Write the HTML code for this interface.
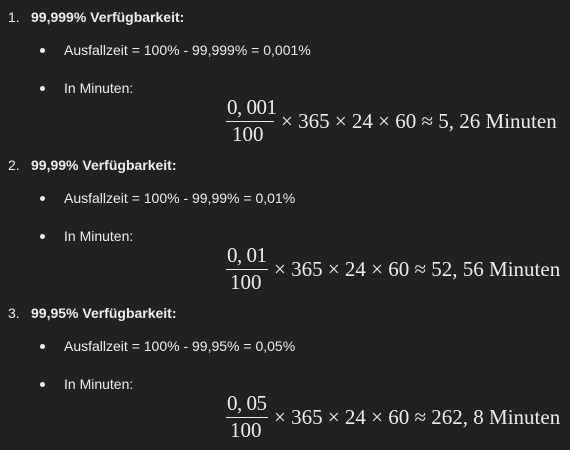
<!DOCTYPE html>
<html><head><style>
body{margin:0;width:570px;height:450px;background:#212121;color:#ececec;font-family:"Liberation Sans",sans-serif;font-size:14px;position:relative;overflow:hidden}
.a{position:absolute;white-space:nowrap;line-height:18px}
.m{position:absolute;white-space:nowrap;font-family:"Liberation Serif",serif;font-size:21px;line-height:22px}
.dot{position:absolute;width:5px;height:5px;border-radius:50%;background:#ececec}
.bar{position:absolute;height:1px;background:#ececec;width:48px}
</style></head><body>

<div class="a" style="left:8px;top:8px">1.</div>
<div class="a" style="left:31px;top:8px;font-weight:bold">99,999% Verfügbarkeit:</div>
<div class="dot" style="left:40px;top:48px"></div>
<div class="a" style="left:64px;top:41px">Ausfallzeit = 100% - 99,999% = 0,001%</div>
<div class="dot" style="left:40px;top:86px"></div>
<div class="a" style="left:64px;top:79px">In Minuten:</div>
<div class="m" style="left:227px;top:96px;letter-spacing:-0.5px">0, 001</div>
<div class="bar" style="left:226px;top:121px"></div>
<div class="m" style="left:232px;top:123px">100</div>
<div class="m" style="left:281px;top:110px">× 365 × 24 × 60 ≈ 5, 26 Minuten</div>

<div class="a" style="left:8px;top:156px">2.</div>
<div class="a" style="left:31px;top:156px;font-weight:bold">99,99% Verfügbarkeit:</div>
<div class="dot" style="left:40px;top:196px"></div>
<div class="a" style="left:64px;top:189px">Ausfallzeit = 100% - 99,99% = 0,01%</div>
<div class="dot" style="left:40px;top:234px"></div>
<div class="a" style="left:64px;top:227px">In Minuten:</div>
<div class="m" style="left:227px;top:244px;letter-spacing:-0.5px">0, 01</div>
<div class="bar" style="left:226px;top:269px;width:42px"></div>
<div class="m" style="left:230px;top:271px">100</div>
<div class="m" style="left:274px;top:258px">× 365 × 24 × 60 ≈ 52, 56 Minuten</div>

<div class="a" style="left:8px;top:304px">3.</div>
<div class="a" style="left:31px;top:304px;font-weight:bold">99,95% Verfügbarkeit:</div>
<div class="dot" style="left:40px;top:344px"></div>
<div class="a" style="left:64px;top:337px">Ausfallzeit = 100% - 99,95% = 0,05%</div>
<div class="dot" style="left:40px;top:382px"></div>
<div class="a" style="left:64px;top:375px">In Minuten:</div>
<div class="m" style="left:227px;top:392px;letter-spacing:-0.5px">0, 05</div>
<div class="bar" style="left:226px;top:417px;width:42px"></div>
<div class="m" style="left:230px;top:419px">100</div>
<div class="m" style="left:274px;top:406px">× 365 × 24 × 60 ≈ 262, 8 Minuten</div>

</body></html>
